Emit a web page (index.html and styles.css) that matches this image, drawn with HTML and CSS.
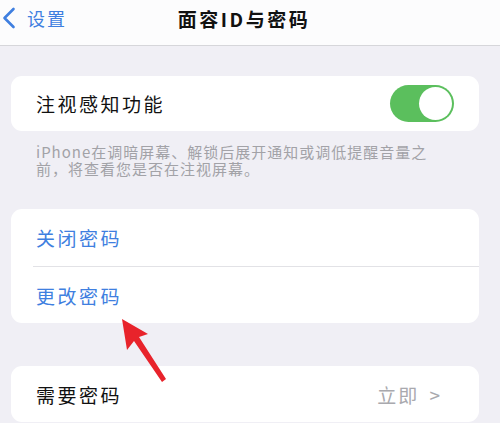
FILE: index.html
```html
<!DOCTYPE html>
<html lang="zh-CN">
<head>
    <meta charset="UTF-8">
    <meta name="viewport" content="width=device-width, initial-scale=1.0">
    <title>面容ID与密码</title>
    <link rel="stylesheet" href="styles.css">
</head>
<body>
    <header class="nav">
        <a class="nav-back" href="#">
            <svg class="nav-chevron" viewBox="0 0 14 22" width="14" height="22">
                <path d="M11.5 2 L2.5 11 L11.5 20" fill="none" stroke="currentColor" stroke-width="2.6" stroke-linecap="round" stroke-linejoin="round"/>
            </svg>
            <span>设置</span>
        </a>
        <h1 class="nav-title">面容ID与密码</h1>
        <span></span>
    </header>

    <main class="settings">
        <section class="group group-first">
            <div class="card">
                <div class="row">
                    <span class="row-label">注视感知功能</span>
                    <span class="switch is-on"><span class="switch-knob"></span></span>
                </div>
            </div>
            <p class="note">iPhone在调暗屏幕、解锁后展开通知或调低提醒音量之前，将查看您是否在注视屏幕。</p>
        </section>

        <section class="group">
            <div class="card">
                <div class="row row-link"><span class="row-label">关闭密码</span></div>
                <div class="row row-link"><span class="row-label">更改密码</span></div>
            </div>
        </section>

        <section class="group group-last">
            <div class="card">
                <div class="row row-short">
                    <span class="row-label">需要密码</span>
                    <span class="row-value">立即 <span class="row-arrow">&gt;</span></span>
                </div>
            </div>
        </section>
    </main>

    <!-- красная стрелка-указатель поверх скриншота -->
    <svg class="pointer" viewBox="0 0 500 423" width="500" height="423">
        <polygon points="122,319 148,334 139,337 166,379 162,382 134,341 127,350" fill="#e8232b"/>
    </svg>
</body>
</html>
```

FILE: styles.css
```css
/* База */
html, body {
    margin: 0;
    padding: 0;
}

body {
    width: 500px;
    height: 423px;
    overflow: hidden;
    position: relative;
    background: #f0eff5;
    font-family: "Noto Sans CJK SC", "Noto Sans", sans-serif;
    color: #111;
}

/* Шапка */
.nav {
    height: 46px;
    display: grid;
    grid-template-columns: 1fr auto 1fr;
    align-items: start;
    padding: 6px 12px 0 0;
    box-sizing: border-box;
    background: #fcfcfd;
    border-bottom: 1px solid #d6d6da;
}

.nav-back {
    display: flex;
    align-items: center;
    gap: 11px;
    padding-left: 2px;
    color: #3f7fe0;
    text-decoration: none;
    font-size: 18px;
    letter-spacing: 2px;
    line-height: 24px;
}

.nav-title {
    margin: 0;
    font-size: 19px;
    font-weight: 600;
    letter-spacing: 2.5px;
    line-height: 26px;
}

/* Группы настроек */
.settings {
    padding: 0 21px 0 11px;
}

.group {
    margin-top: 32px;
}

.group-first {
    margin-top: 30px;
}

.group-last {
    margin-top: 43px;
}

.card {
    background: #fff;
    border-radius: 11px;
    overflow: hidden;
}

.row {
    height: 55px;
    display: flex;
    align-items: center;
    justify-content: space-between;
    padding: 0 25px;
    font-size: 19px;
    letter-spacing: 2.5px;
}

.row-link {
    height: 57px;
    color: #3f7fe0;
    position: relative;
}

.row-link + .row-link {
    border-top: 1px solid #e2e2e6;
    margin-left: 22px;
    padding-left: 3px;
    height: 56px;
}

.row-short {
    height: 56px;
}

.row-value {
    color: #a9a9ae;
    letter-spacing: 2px;
    padding-right: 12px;
}

.row-arrow {
    margin-left: 4px;
}

.note {
    margin: 0;
    padding: 12px 40px 0 25px;
    font-size: 15px;
    letter-spacing: 1px;
    line-height: 17px;
    color: #a2a2a7;
}

/* Переключатель */
.switch {
    width: 64px;
    height: 37px;
    border-radius: 19px;
    background: #5bbf5d;
    display: flex;
    align-items: center;
    justify-content: flex-end;
    padding: 0 2px;
    box-sizing: border-box;
}

.switch-knob {
    width: 33px;
    height: 33px;
    border-radius: 50%;
    background: #fff;
}

/* Стрелка-аннотация */
.pointer {
    position: absolute;
    left: 0;
    top: 0;
    pointer-events: none;
}
```
